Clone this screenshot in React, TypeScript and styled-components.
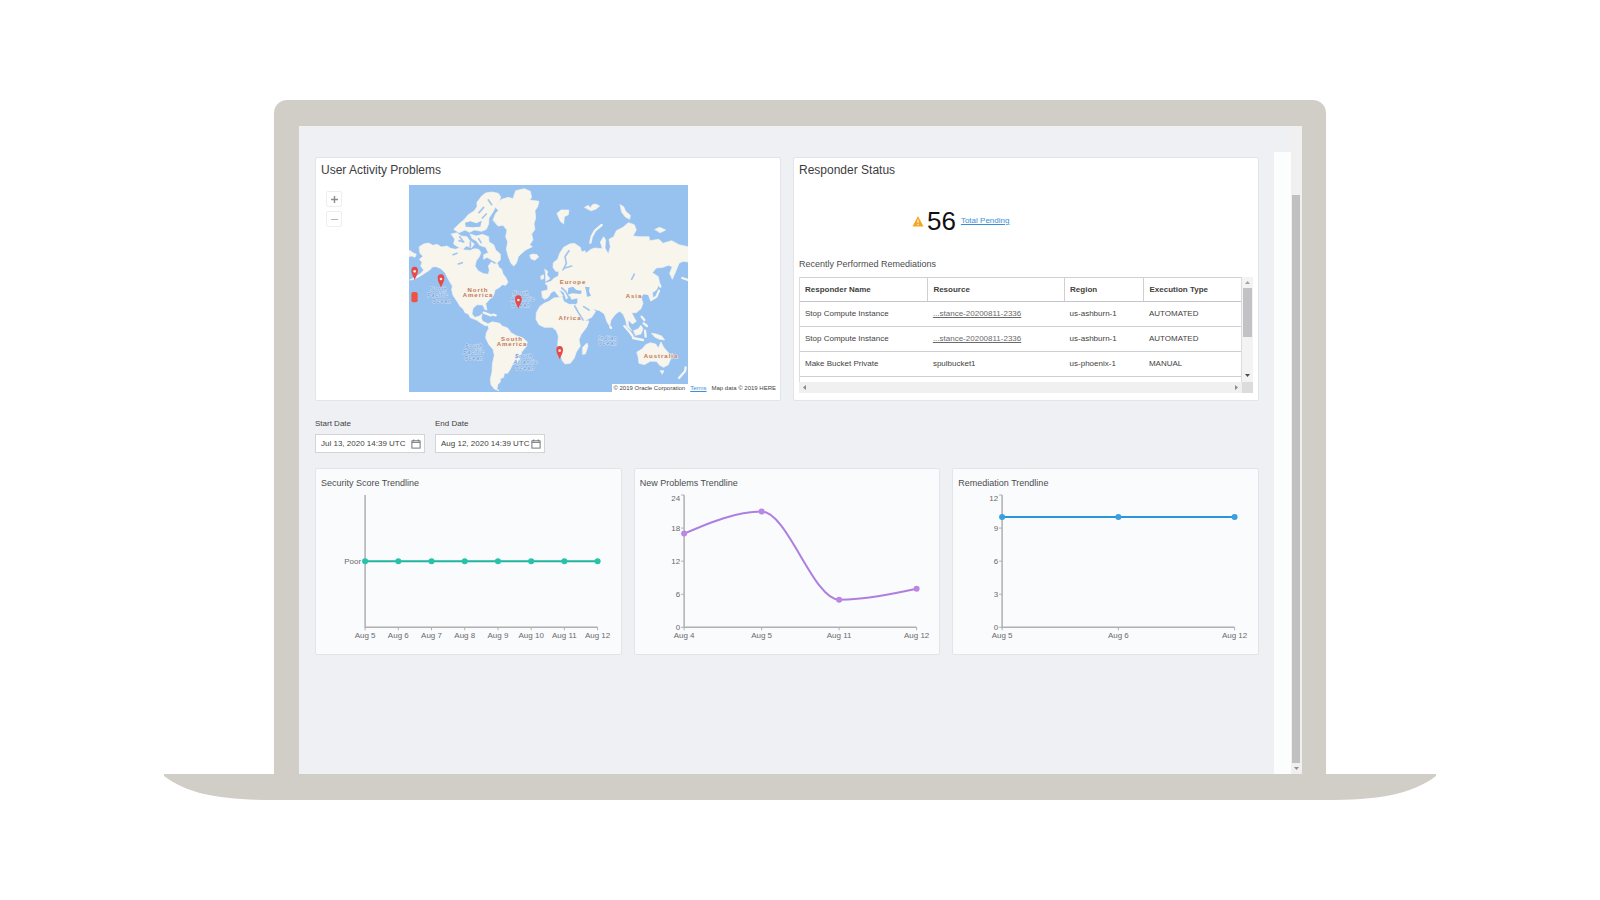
import React from "react";
import styled, { createGlobalStyle } from "styled-components";

const Global = createGlobalStyle`
  * { box-sizing: border-box; }
  body { margin: 0; background: #fff; }
  body, button, input { font-family: "Liberation Sans", Arial, sans-serif; }
`;

/* ---------- Laptop ---------- */
const FRAME = "#d1cec7";

const Page = styled.main`
  padding: 100px 164px;
`;
const Lid = styled.div`
  margin: 0 110px;
  padding: 26px 24px 0 25px;
  border-radius: 13px 13px 0 0;
  background: ${FRAME};
`;
const Base = styled.div`
  display: flex;
  height: 26px;
`;
const BaseBar = styled.div`
  flex: 1;
  background: ${FRAME};
`;
const Cap = styled.svg<{ $flip?: boolean }>`
  width: 110px;
  height: 26px;
  display: block;
  transform: ${(p) => (p.$flip ? "scaleX(-1)" : "none")};
`;
const Screen = styled.div`
  display: flex;
  min-height: 648px;
  background: #eff0f4;
`;
const Content = styled.div`
  flex: 1;
  min-width: 0;
  padding: 31px 15px 0 16px;
`;
const Gutter = styled.div`
  width: 17px;
  margin-top: 26px;
  background: #fcfdfd;
`;
const PageScroll = styled.div`
  width: 11px;
  padding: 69px 2px 0 1px;
  display: flex;
  flex-direction: column;
  align-items: center;
  background: #f1f0f1;
`;
const PageThumb = styled.div`
  flex: 1;
  align-self: stretch;
  background: #c1bfc0;
`;
const ArrowBox = styled.div<{ $size: number }>`
  height: ${(p) => p.$size}px;
  display: flex;
  align-items: center;
  justify-content: center;
`;

/* ---------- Cards ---------- */
const Grid = styled.div<{ $cols: number }>`
  display: grid;
  grid-template-columns: repeat(${(p) => p.$cols}, minmax(0, 1fr));
  gap: 12px;
`;
const Card = styled.section<{ $tinted?: boolean }>`
  position: relative;
  border: 1px solid #e3e4e8;
  border-radius: 2px;
  background: ${(p) => (p.$tinted ? "#fafbfd" : "#fff")};
`;
const TopCard = styled(Card)`
  height: 244px;
`;
const Title = styled.h2`
  margin: 0;
  padding: 4px 5px 0;
  font-size: 12px;
  line-height: 16px;
  font-weight: 400;
  color: #3c3c3e;
`;
const SmallTitle = styled.h3`
  margin: 0;
  font-size: 9px;
  line-height: 12px;
  font-weight: 400;
  color: #4c4c4e;
`;

/* ---------- Map ---------- */
const MapRow = styled.div`
  display: grid;
  grid-template-columns: 1fr auto 1fr;
  padding-top: 7px;
`;
const ZoomControls = styled.div`
  display: flex;
  flex-direction: column;
  align-items: flex-start;
  gap: 4px;
  padding: 6px 0 0 10px;
`;
const ZoomButton = styled.button`
  width: 16px;
  height: 16px;
  padding: 0;
  display: flex;
  align-items: center;
  justify-content: center;
  border: 1px solid #eeeeef;
  border-radius: 2px;
  background: #fff;
`;
const MapSvg = styled.svg`
  display: block;
  width: 279px;
  height: 207px;
`;
const Attribution = styled.div`
  position: absolute;
  right: 3px;
  bottom: 8px;
  display: flex;
  gap: 5px;
  padding: 0 1px;
  font-size: 6px;
  line-height: 8px;
  color: #444;
  background: #fff;
`;
const Terms = styled.a`
  color: #3d8fd6;
`;
const Place = styled.text`
  font: 700 6px "Liberation Sans", sans-serif;
  letter-spacing: 1px;
  text-anchor: middle;
  fill: #c27a58;
  stroke: #f7f2e8;
  stroke-width: 1px;
  paint-order: stroke;
`;
const Ocean = styled.text`
  font: italic 5px "Liberation Sans", sans-serif;
  letter-spacing: 1px;
  text-anchor: middle;
  fill: #5f8fca;
  stroke: #cfe2f7;
  stroke-width: 1px;
  paint-order: stroke;
`;

/* ---------- Responder card ---------- */
const Pending = styled.div`
  display: flex;
  align-items: center;
  height: 32px;
  margin-top: 27px;
  padding-left: 118px;
`;
const Count = styled.span`
  margin: 0 5px 0 3px;
  font-size: 26px;
  line-height: 32px;
  color: #111;
`;
const PendingLink = styled.a`
  font-size: 8px;
  line-height: 12px;
  color: #3b8fd9;
`;
const Remediations = styled.div`
  padding: 21px 5px 0;
`;
const TableFrame = styled.div`
  display: grid;
  grid-template-columns: minmax(0, 1fr) 11px;
  grid-template-rows: 105px 11px;
  margin-top: 7px;
`;
const TableClip = styled.div`
  overflow: hidden;
  border-left: 1px solid #dcdcde;
  border-right: 1px solid #dcdcde;
`;
const Table = styled.table`
  width: 100%;
  table-layout: fixed;
  border-collapse: collapse;
  border-top: 1px solid #d0d0d3;
  font-size: 8px;
  line-height: 10px;
  color: #3f3f41;
`;
const Th = styled.th<{ $w?: string }>`
  width: ${(p) => p.$w ?? "auto"};
  height: 24px;
  padding: 0 5px;
  text-align: left;
  border-bottom: 1px solid #c6c6ca;
  & + & { border-left: 1px solid #d0d0d3; }
`;
const Td = styled.td`
  height: 25px;
  padding: 0 5px;
  white-space: nowrap;
  border-bottom: 1px solid #cfcfd3;
`;
const ResourceLink = styled.a`
  color: #6a6a6c;
`;
const VScroll = styled.div`
  display: flex;
  flex-direction: column;
  background: #f3f3f4;
`;
const VThumb = styled.div`
  height: 49px;
  margin: 0 1px auto 1px;
  background: #c2c2c4;
`;
const HScroll = styled.div`
  display: flex;
  align-items: center;
  justify-content: space-between;
  padding: 0 3px;
  background: #f0f0f1;
`;
const ScrollCorner = styled.div`
  background: #dcdcdd;
`;

/* ---------- Date filters ---------- */
const Filters = styled.form`
  display: flex;
  gap: 10px;
  padding: 17px 0 15px;
`;
const Field = styled.div`
  width: 110px;
`;
const Label = styled.label`
  display: block;
  font-size: 8px;
  line-height: 12px;
  color: #3f3f41;
`;
const DateBox = styled.div`
  display: flex;
  align-items: center;
  height: 19px;
  margin-top: 4px;
  padding: 0 3px 0 5px;
  border: 1px solid #d3d4d8;
  background: #fff;
`;
const DateInput = styled.input`
  flex: 1;
  min-width: 0;
  padding: 0;
  border: 0;
  outline: 0;
  background: none;
  font-size: 8px;
  line-height: 12px;
  color: #3f3f41;
`;
const IconButton = styled.button`
  display: flex;
  padding: 0;
  border: 0;
  background: none;
`;

/* ---------- Charts ---------- */
const ChartTitle = styled(SmallTitle)`
  padding: 8px 5px 0;
`;
const ChartSvg = styled.svg`
  display: block;
  width: 100%;
  height: auto;
`;
const AxisText = styled.text`
  font: 8px "Liberation Sans", sans-serif;
  fill: #6a6a6c;
`;

function Arrow({ dir, color }: { dir: "up" | "down" | "left" | "right"; color: string }) {
  const turn = { up: 0, right: 90, down: 180, left: 270 }[dir];
  return (
    <svg width="5" height="5" viewBox="0 0 5 5" aria-hidden="true">
      <path d="M0 4L2.5 1L5 4Z" fill={color} transform={`rotate(${turn} 2.5 2.5)`} />
    </svg>
  );
}

function CalendarIcon() {
  return (
    <svg width="10" height="10" viewBox="0 0 11 10" fill="none" stroke="#6b6b6e" aria-hidden="true">
      <rect x="1" y="1.5" width="9" height="8" />
      <path d="M1 3.2H10M3 0V2M8 0V2" />
    </svg>
  );
}

const LAND = [
  // North America
  "M447 470L460 462 474 459 488 466 500 463 513 471 530 468 541 475 555 478 568 474 582 480 600 481 612 476 625 478 632 488 627 500 618 512 614 528 624 543 640 551 654 553 657 540 654 528 663 516 672 522 681 520 686 532 694 538 698 552 706 562 713 577 706 586 696 584 688 592 674 600 670 616 657 629 646 641 650 660 643 658 638 645 620 644 608 655 605 672 613 682 626 679 635 672 633 685 637 694 649 699 657 706 645 707 631 699 620 691 600 683 594 672 584 668 578 656 570 650 560 634 548 616 544 600 546 588 538 575 530 560 524 548 512 536 498 530 486 531 478 540 463 550 447 560 427 569 418 570 436 560 453 549 460 540 451 528 455 517 447 508 458 499 449 490Z",
  // Arctic islands
  "M620 337L634 318 646 309 664 306 684 310 691 320 688 334 676 350 668 366 656 384 655 402 648 418 634 424 612 420 598 427 584 420 566 428 550 418 566 402 580 390 594 374 612 362 620 350Z",
  "M543 432L560 428 572 438 590 440 598 452 612 462 604 473 588 468 578 478 562 470 550 462 553 448Z",
  "M600 432L618 438 636 433 655 440 656 456 670 464 676 480 690 492 690 510 680 519 664 510 650 502 640 508 640 494 654 488 646 472 628 466 618 452 606 446Z",
  "M668 390L676 370 684 362 675 350 694 328 714 322 728 326 736 302 762 296 780 304 784 322 778 330 806 334 802 350 794 362 796 384 791 402 794 418 784 432 788 450 778 464 786 470 766 480 752 492 744 500 738 520 730 528 722 520 714 500 708 478 712 456 706 440 710 420 698 406 684 408Z",
  "M779 495L788 492 800 494 805 501 793 511 782 506Z",
  "M416 480L428 488 438 493 434 502 424 498 416 500Z",
  // South America
  "M652 702L666 695 688 700 696 708 712 714 722 728 738 737 758 744 771 756 766 772 754 786 750 804 742 817 726 824 720 838 712 850 702 850 700 862 690 866 690 876 682 884 680 896 686 902 672 897 662 884 660 868 665 846 666 822 672 796 668 778 656 764 646 744 648 728 655 716Z",
  // Africa and Madagascar
  "M822 640L836 634 850 624 876 621 880 634 896 643 914 643 922 662 934 680 942 692 956 693 950 710 932 734 926 750 930 768 918 786 912 804 900 820 884 822 876 812 868 786 862 766 864 738 858 722 846 712 822 712 806 704 797 688 798 668 808 650Z",
  "M937 772L950 759 953 768 945 792 937 793Z",
  // Eurasia
  "M816 622L814 604 832 600 832 588 824 580 842 574 852 564 864 558 866 544 856 544 848 532 849 518 862 508 868 490 880 472 898 462 912 460 930 472 934 486 944 482 946 490 962 478 974 474 996 476 990 456 1000 440 1006 450 1004 474 1014 492 1020 470 1016 448 1030 440 1038 422 1058 412 1074 398 1092 404 1098 420 1088 438 1108 440 1136 440 1138 452 1166 448 1178 460 1204 452 1226 464 1253 470 1253 516 1238 514 1226 520 1218 540 1206 568 1198 550 1206 530 1194 526 1178 532 1158 534 1146 548 1164 560 1168 580 1158 600 1146 608 1148 622 1140 630 1134 614 1120 612 1112 620 1118 640 1112 656 1098 668 1084 668 1092 684 1098 694 1086 702 1074 690 1074 706 1084 722 1070 710 1066 690 1058 672 1048 664 1036 672 1022 690 1018 708 1010 696 1002 672 988 662 966 656 976 664 964 682 940 694 926 668 914 646 922 638 922 624 904 628 898 616 888 628 880 606 866 600 878 618 868 622 852 602 842 608 834 622 824 628Z",
  // British Isles
  "M824 538L832 544 830 554 839 566 826 574 826 556Z",
  "M812 558L820 554 820 566 813 568Z",
  // Arctic Ocean islands
  "M860 370L872 360 896 360 894 374 882 380 880 402 870 394 864 380Z",
  "M943 352L954 346 960 354 966 344 976 342 988 348 976 358 962 362Z",
  "M1050 344L1060 350 1066 364 1080 376 1078 388 1064 380 1054 366Z",
  "M1154 418L1168 412 1186 420 1170 428Z",
  // South-east Asia and Oceania
  "M1090 722L1104 716 1112 706 1118 716 1112 732 1096 736Z",
  "M1144 730L1158 732 1174 738 1183 750 1168 748 1154 742Z",
  "M1100 786L1116 776 1126 764 1140 758 1156 762 1164 774 1172 756 1180 772 1194 788 1202 804 1194 824 1180 832 1168 826 1158 814 1140 814 1122 824 1106 820 1104 804Z",
  "M1170 842L1181 842 1176 852Z",
];

const THIN_LAND = [
  "M994 405L974 422 964 440 960 458",
  "M1168 584L1170 590M1166 602L1158 620 1142 630",
  "M1114 680L1122 690M1120 700L1130 708",
  "M1062 708L1078 726 1088 740M1088 744L1118 750M1124 722L1126 740",
  "M1246 832L1244 844 1226 864",
  "M640 668L662 676M668 674L676 676",
  "M1020 710L1022 714",
  "M1236 564L1253 570",
];

const WATER = [
  "M894 594L908 590 918 600 934 602 932 612 906 610 892 614Z",
  "M944 590L958 592 956 604 962 618 950 620 948 606Z",
  "M584 398L600 394 618 400 634 392 630 410 606 412 586 410Z",
];

const THIN_WATER = [
  "M913 648L922 664 938 690",
  "M940 650L956 660",
  "M896 482L884 500 888 520 878 540M884 534L904 528",
  "M1084 568L1092 552",
  "M640 352L626 368M648 372L636 384M600 470L600 456M568 440L580 456 566 452",
  "M564 522L576 518M548 494L560 490M625 446L632 458M654 330L664 344",
  "M874 594L886 604 894 620",
];

const PINS = [
  [433, 570],
  [512, 593],
  [744, 656],
  [868, 808],
];

const PLACES: [string, number, number][] = [
  ["North", 69, 107],
  ["America", 69, 112],
  ["South", 103, 156],
  ["America", 103, 161],
  ["Europe", 164, 99],
  ["Africa", 161, 135],
  ["Asia", 225, 113],
  ["Australia", 252, 173],
];

const OCEANS: [string, number, number][] = [
  ["North", 30, 106],
  ["Pacific", 29, 112],
  ["Ocean", 33, 118],
  ["North", 112, 110],
  ["Atlantic", 114, 116],
  ["Ocean", 112, 122],
  ["Indian", 199, 155],
  ["Ocean", 199, 160],
  ["South", 65, 163],
  ["Pacific", 65, 169],
  ["Ocean", 65, 175],
  ["South", 115, 173],
  ["Atlantic", 117, 179],
  ["Ocean", 116, 185],
];

function WorldMap() {
  return (
    <MapSvg viewBox="0 0 279 207" role="img" aria-label="World map of user activity problems">
      <rect width="279" height="207" fill="#97c1ef" />
      <g transform="scale(.33333) translate(-416 -285)" strokeLinejoin="round" strokeLinecap="round">
        {LAND.map((d) => (
          <path key={d} d={d} fill="#f8f5ed" stroke="#f2f4f2" strokeWidth="2" />
        ))}
        {THIN_LAND.map((d) => (
          <path key={d} d={d} fill="none" stroke="#f4f4f0" strokeWidth="7" />
        ))}
        {WATER.map((d) => (
          <path key={d} d={d} fill="#97c1ef" />
        ))}
        {THIN_WATER.map((d) => (
          <path key={d} d={d} fill="none" stroke="#9fc6ef" strokeWidth="5" />
        ))}
      </g>
      {OCEANS.map(([t, x, y]) => (
        <Ocean key={t + x + y} x={x} y={y}>{t}</Ocean>
      ))}
      {PLACES.map(([t, x, y]) => (
        <Place key={t + x + y} x={x} y={y}>{t}</Place>
      ))}
      <g transform="scale(.33333) translate(-416 -285)">
        {PINS.map(([x, y]) => (
          <g key={x} transform={`translate(${x} ${y})`}>
            <path d="M0 0C-3 -10 -10 -17 -10 -28A10 12 0 0 1 10 -28C10 -17 3 -10 0 0Z" fill="#e64a48" />
            <circle cy="-26" r="4" fill="#fbe9e6" />
          </g>
        ))}
        <rect x="423" y="606" width="19" height="31" rx="6" fill="#ef5346" />
      </g>
    </MapSvg>
  );
}

type Point = { x: number; y: number };

/* Monotone cubic curve: flat at turning points, eased at both ends. */
function curve(pts: Point[]) {
  const slope = (i: number) => (pts[i + 1].y - pts[i].y) / (pts[i + 1].x - pts[i].x);
  const last = pts.length - 1;
  const tangent = (i: number) => {
    if (i === 0) return 1.5 * slope(0);
    if (i === last) return 1.5 * slope(last - 1);
    return 0;
  };
  return pts.slice(1).reduce((d, p, i) => {
    const a = pts[i];
    const h = (p.x - a.x) / 3;
    return `${d}C${a.x + h} ${a.y + h * tangent(i)} ${p.x - h} ${p.y - h * tangent(i + 1)} ${p.x} ${p.y}`;
  }, `M${pts[0].x} ${pts[0].y}`);
}

type Chart = {
  title: string;
  color: string;
  dot: string;
  max: number;
  values: number[];
  labels: string[];
  ticks: { v: number; text: string }[];
  tickMarks?: boolean;
};

const CHARTS: Chart[] = [
  {
    title: "Security Score Trendline",
    color: "#20b5a0",
    dot: "#27c2a9",
    max: 2,
    values: [1, 1, 1, 1, 1, 1, 1, 1],
    labels: ["Aug 5", "Aug 6", "Aug 7", "Aug 8", "Aug 9", "Aug 10", "Aug 11", "Aug 12"],
    ticks: [{ v: 1, text: "Poor" }],
  },
  {
    title: "New Problems Trendline",
    color: "#ae7fe0",
    dot: "#bb86e6",
    max: 24,
    values: [17, 21, 5, 7],
    labels: ["Aug 4", "Aug 5", "Aug 11", "Aug 12"],
    ticks: [0, 6, 12, 18, 24].map((v) => ({ v, text: String(v) })),
    tickMarks: true,
  },
  {
    title: "Remediation Trendline",
    color: "#2a96d8",
    dot: "#3a9fdf",
    max: 12,
    values: [10, 10, 10],
    labels: ["Aug 5", "Aug 6", "Aug 12"],
    ticks: [0, 3, 6, 9, 12].map((v) => ({ v, text: String(v) })),
    tickMarks: true,
  },
];

const PLOT = { left: 49, right: 281, top: 6, bottom: 138 };

function TrendCard({ chart }: { chart: Chart }) {
  const x = (i: number) => PLOT.left + ((PLOT.right - PLOT.left) * i) / (chart.labels.length - 1);
  const y = (v: number) => PLOT.bottom - ((PLOT.bottom - PLOT.top) * v) / chart.max;
  const pts = chart.values.map((v, i) => ({ x: x(i), y: y(v) }));
  return (
    <Card $tinted>
      <ChartTitle>{chart.title}</ChartTitle>
      <ChartSvg viewBox="0 0 304 165" role="img" aria-label={chart.title}>
        <path
          d={`M${PLOT.left} ${PLOT.top}V${PLOT.bottom}H${PLOT.right}`}
          fill="none"
          stroke="#b0b0b3"
          strokeWidth="1.5"
        />
        {chart.ticks.map((t) => (
          <g key={t.v}>
            {chart.tickMarks && (
              <path d={`M${PLOT.left - 3} ${y(t.v)}H${PLOT.left}`} stroke="#b0b0b3" />
            )}
            <AxisText x={PLOT.left - 4} y={y(t.v) + (t.v === chart.max ? 6 : 3)} textAnchor="end">
              {t.text}
            </AxisText>
          </g>
        ))}
        {chart.labels.map((l, i) => (
          <g key={l}>
            <path d={`M${x(i)} ${PLOT.bottom}V${PLOT.bottom + 3}`} stroke="#b0b0b3" />
            <AxisText x={x(i)} y={PLOT.bottom + 11} textAnchor="middle">{l}</AxisText>
          </g>
        ))}
        <path d={curve(pts)} fill="none" stroke={chart.color} strokeWidth="2" />
        {pts.map((p) => (
          <circle key={p.x} cx={p.x} cy={p.y} r="3" fill={chart.dot} />
        ))}
      </ChartSvg>
    </Card>
  );
}

const ROWS = [
  ["Stop Compute Instance", "...stance-20200811-2336", "us-ashburn-1", "AUTOMATED"],
  ["Stop Compute Instance", "...stance-20200811-2336", "us-ashburn-1", "AUTOMATED"],
  ["Make Bucket Private", "spulbucket1", "us-phoenix-1", "MANUAL"],
];

function DateField({ id, label, value }: { id: string; label: string; value: string }) {
  return (
    <Field>
      <Label htmlFor={id}>{label}</Label>
      <DateBox>
        <DateInput id={id} defaultValue={value} />
        <IconButton type="button" aria-label={`Pick ${label}`}>
          <CalendarIcon />
        </IconButton>
      </DateBox>
    </Field>
  );
}

export default function App() {
  return (
    <Page>
      <Global />
      <Lid>
        <Screen>
          <Content>
            <Grid $cols={2}>
              <TopCard>
                <Title>User Activity Problems</Title>
                <MapRow>
                  <ZoomControls>
                    <ZoomButton aria-label="Zoom in">
                      <svg width="7" height="7" viewBox="0 0 7 7" stroke="#8c8c8e" strokeWidth="1.4">
                        <path d="M3.5 0V7M0 3.5H7" />
                      </svg>
                    </ZoomButton>
                    <ZoomButton aria-label="Zoom out">
                      <svg width="7" height="7" viewBox="0 0 7 7" stroke="#b4b4b6">
                        <path d="M0 3.5H7" />
                      </svg>
                    </ZoomButton>
                  </ZoomControls>
                  <WorldMap />
                </MapRow>
                <Attribution>
                  <span>© 2019 Oracle Corporation</span>
                  <Terms href="#terms">Terms</Terms>
                  <span>Map data © 2019 HERE</span>
                </Attribution>
              </TopCard>

              <TopCard>
                <Title>Responder Status</Title>
                <Pending>
                  <svg width="12" height="12" viewBox="0 0 12 12" aria-label="Warning">
                    <path d="M6 1L11.5 11.5H0.5Z" fill="#f5a623" />
                    <path d="M6 4.5V8M6 9V10.2" stroke="#fff3d6" strokeWidth="1.2" />
                  </svg>
                  <Count>56</Count>
                  <PendingLink href="#pending">Total Pending</PendingLink>
                </Pending>
                <Remediations>
                  <SmallTitle>Recently Performed Remediations</SmallTitle>
                  <TableFrame>
                    <TableClip>
                      <Table>
                        <thead>
                          <tr>
                            <Th $w="29%">Responder Name</Th>
                            <Th $w="31%">Resource</Th>
                            <Th $w="18%">Region</Th>
                            <Th>Execution Type</Th>
                          </tr>
                        </thead>
                        <tbody>
                          {ROWS.map(([name, resource, region, type], i) => (
                            <tr key={i}>
                              <Td>{name}</Td>
                              <Td>
                                {resource.startsWith("...") ? (
                                  <ResourceLink href="#resource">{resource}</ResourceLink>
                                ) : (
                                  resource
                                )}
                              </Td>
                              <Td>{region}</Td>
                              <Td>{type}</Td>
                            </tr>
                          ))}
                        </tbody>
                      </Table>
                    </TableClip>
                    <VScroll>
                      <ArrowBox $size={11}><Arrow dir="up" color="#a3a3a5" /></ArrowBox>
                      <VThumb />
                      <ArrowBox $size={14}><Arrow dir="down" color="#4a4a4c" /></ArrowBox>
                    </VScroll>
                    <HScroll>
                      <Arrow dir="left" color="#8a8a8c" />
                      <Arrow dir="right" color="#8a8a8c" />
                    </HScroll>
                    <ScrollCorner />
                  </TableFrame>
                </Remediations>
              </TopCard>
            </Grid>

            <Filters>
              <DateField id="start" label="Start Date" value="Jul 13, 2020 14:39 UTC" />
              <DateField id="end" label="End Date" value="Aug 12, 2020 14:39 UTC" />
            </Filters>

            <Grid $cols={3}>
              {CHARTS.map((c) => (
                <TrendCard key={c.title} chart={c} />
              ))}
            </Grid>
          </Content>
          <Gutter />
          <PageScroll>
            <PageThumb />
            <ArrowBox $size={11}><Arrow dir="down" color="#8f8f91" /></ArrowBox>
          </PageScroll>
        </Screen>
      </Lid>
      <Base>
        <Cap viewBox="0 0 110 26" aria-hidden="true">
          <path d="M0 0H110V26C60 26 25 21 0 2Z" fill={FRAME} />
        </Cap>
        <BaseBar />
        <Cap $flip viewBox="0 0 110 26" aria-hidden="true">
          <path d="M0 0H110V26C60 26 25 21 0 2Z" fill={FRAME} />
        </Cap>
      </Base>
    </Page>
  );
}
